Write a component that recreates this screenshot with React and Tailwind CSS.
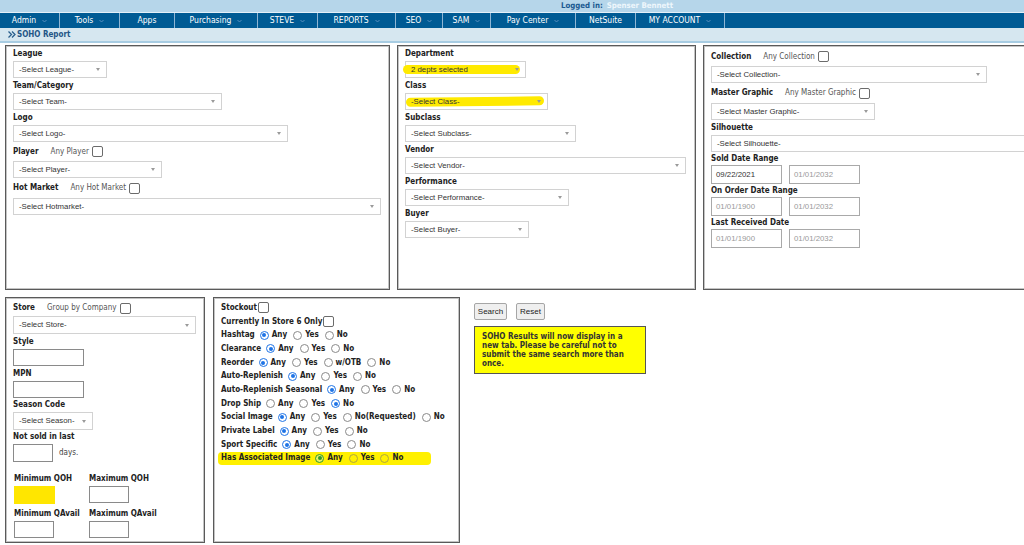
import React from 'react';

const cond = "font-['DejaVu_Sans_Condensed','DejaVu_Sans',sans-serif]";
const arial = "font-['Liberation_Sans',Arial,sans-serif]";

const navItems = [
    { label: 'Admin', w: 'w-[60px]', caret: true },
    { label: 'Tools', w: 'w-[60px]', caret: true },
    { label: 'Apps', w: 'w-[55px]', caret: false },
    { label: 'Purchasing', w: 'w-[83px]', caret: true },
    { label: 'STEVE', w: 'w-[60px]', caret: true },
    { label: 'REPORTS', w: 'w-[78px]', caret: true },
    { label: 'SEO', w: 'w-[47px]', caret: true },
    { label: 'SAM', w: 'w-[48px]', caret: true },
    { label: 'Pay Center', w: 'w-[85px]', caret: true },
    { label: 'NetSuite', w: 'w-[60px]', caret: false },
    { label: 'MY ACCOUNT', w: 'w-[89px]', caret: true },
];

const radioRows = [
    ['Hashtag', ['Any', 'Yes', 'No'], 0],
    ['Clearance', ['Any', 'Yes', 'No'], 0],
    ['Reorder', ['Any', 'Yes', 'w/OTB', 'No'], 0],
    ['Auto-Replenish', ['Any', 'Yes', 'No'], 0],
    ['Auto-Replenish Seasonal', ['Any', 'Yes', 'No'], 0],
    ['Drop Ship', ['Any', 'Yes', 'No'], 2],
    ['Social Image', ['Any', 'Yes', 'No(Requested)', 'No'], 0],
    ['Private Label', ['Any', 'Yes', 'No'], 0],
    ['Sport Specific', ['Any', 'Yes', 'No'], 0],
];

const Caret = () => (
    <svg width="5" height="4" viewBox="0 0 5 4" className="ml-[6px]">
        <path d="M0.5 1 L2.5 3 L4.5 1" fill="none" stroke="#5d93c2" strokeWidth="0.9" />
    </svg>
);

const Checkbox = () => (
    <span className="inline-block w-[11px] h-[11px] rounded-[2px] border border-[#6b6b6b] bg-white" />
);

const Select = ({ w, h = 'h-[17px]', text, hl }) => (
    <div className={`relative flex items-center border border-[#d2d2d2] bg-white ${w} ${h}`}>
        {hl}
        <span className={`relative pl-[5px] text-[7.8px] text-[#333] ${arial}`}>{text}</span>
        <span className="relative ml-auto mr-[6px] w-0 h-0 border-x-[2.5px] border-x-transparent border-t-[3px] border-t-[#9a9a9a]" />
    </div>
);

const Label = ({ h = 'h-[15px]', children, any }) => (
    <div className={`flex items-center ${h}`}>
        <span className={`font-bold text-[8px] text-[#222] ${cond}`}>{children}</span>
        {any && (
            <>
                <span className={`ml-[12px] mr-[3px] text-[8px] text-[#555] ${cond}`}>{any}</span>
                <Checkbox />
            </>
        )}
    </div>
);

const DateInput = ({ value, dark }) => (
    <div className={`flex items-center w-[71px] h-[19px] border border-[#a9a9a9] bg-white pl-[4px] text-[7.8px] ${arial} ${dark ? 'text-[#333]' : 'text-[#9a9a9a]'}`}>
        {value}
    </div>
);

const TextBox = ({ w, h = 'h-[17px]', hl }) => (
    <div className={`border ${hl ? 'border-[#ffe600] bg-[#ffe600]' : 'border-[#8a8a8a] bg-white'} ${w} ${h}`} />
);

const Radio = ({ on, hl }) => {
    if (on) {
        const c = hl ? 'border-[#2f9a2a]' : 'border-[#1f74e6]';
        const d = hl ? 'bg-[#2f9a2a]' : 'bg-[#1f74e6]';
        return (
            <span className={`flex items-center justify-center w-[9px] h-[9px] rounded-full border-[1.5px] ${c} ${hl ? 'bg-[#e6f06a]' : 'bg-white'}`}>
                <span className={`w-[4px] h-[4px] rounded-full ${d}`} />
            </span>
        );
    }
    return <span className={`w-[9px] h-[9px] rounded-full border ${hl ? 'border-[#b0a640]' : 'border-[#8a8a8a] bg-white'}`} />;
};

const RadioRow = ({ label, opts, sel, hl }) => (
    <div className={`flex items-center h-[13.7px] gap-[4px] font-bold text-[8px] text-[#222] ${cond}`}>
        <span className="mr-[1px]">{label}</span>
        {opts.map((o, i) => (
            <span key={i} className="flex items-center gap-[3px] mr-[2px]">
                <Radio on={i === sel} hl={hl} />
                <span>{o}</span>
            </span>
        ))}
    </div>
);

const Panel = ({ className, children }) => (
    <div className={`shrink-0 border border-[#5a5a5a] shadow-[inset_0_0_0_1px_#c4c4c4] bg-white ${className}`}>
        {children}
    </div>
);

export default function App() {
    return (
        <div className="w-[1024px] h-[545px] overflow-hidden bg-white">
            {/* header */}
            <div className={`h-[12px] bg-[#b6d6ea] flex items-center pl-[561px] text-[7.8px] font-bold ${cond}`}>
                <span className="text-[#1b5a91]">Logged in:</span>
                <span className="ml-[4px] text-[#eef7fc]">Spenser Bennett</span>
            </div>
            <div className="h-[16px] bg-[#005b94] border-t border-t-[#e4f0f8] flex">
                {navItems.map((n) => (
                    <div
                        key={n.label}
                        className={`${n.w} h-full flex items-center justify-center border-r border-r-[#8fb6d4] text-white text-[8.5px] ${cond}`}
                    >
                        <span>{n.label}</span>
                        {n.caret && <Caret />}
                    </div>
                ))}
            </div>
            <div className="h-[15px] bg-[#d6e7f0] border-b-2 border-b-[#a7cce2] flex items-center pl-[8px]">
                <svg width="8" height="7" viewBox="0 0 8 7" className="mr-[1px]">
                    <path d="M0.5 0.5 L3.5 3.5 L0.5 6.5 M4 0.5 L7 3.5 L4 6.5" fill="none" stroke="#2a5f8c" strokeWidth="1.3" />
                </svg>
                <span className={`font-bold text-[8px] text-[#1f5686] ${cond}`}>SOHO Report</span>
            </div>

            {/* top row */}
            <div className="flex gap-[7px] mt-[2px] pl-[5px]">
                <Panel className="w-[385px] h-[245px] pl-[7px]">
                    <Label>League</Label>
                    <Select w="w-[94px]" text="-Select League-" />
                    <Label>Team/Category</Label>
                    <Select w="w-[209px]" text="-Select Team-" />
                    <Label>Logo</Label>
                    <Select w="w-[275px]" text="-Select Logo-" />
                    <Label h="h-[19px]" any="Any Player">Player</Label>
                    <Select w="w-[149px]" text="-Select Player-" />
                    <Label h="h-[20px]" any="Any Hot Market">Hot Market</Label>
                    <Select w="w-[368px]" text="-Select Hotmarket-" />
                </Panel>

                <Panel className="w-[299px] h-[245px] pl-[7px]">
                    <Label>Department</Label>
                    <Select
                        w="w-[121px]"
                        text="2 depts selected"
                        hl={<span className="absolute left-[-3px] right-[5px] top-[3px] bottom-[3px] rounded-full bg-[#ffea00]" />}
                    />
                    <Label>Class</Label>
                    <Select
                        w="w-[143px]"
                        text="-Select Class-"
                        hl={<span className="absolute left-0 right-[3px] top-[3px] bottom-[3px] rounded-full bg-[#ffea00] -rotate-[0.6deg]" />}
                    />
                    <Label>Subclass</Label>
                    <Select w="w-[171px]" text="-Select Subclass-" />
                    <Label>Vendor</Label>
                    <Select w="w-[281px]" text="-Select Vendor-" />
                    <Label>Performance</Label>
                    <Select w="w-[164px]" text="-Select Performance-" />
                    <Label>Buyer</Label>
                    <Select w="w-[124px]" text="-Select Buyer-" />
                </Panel>

                <Panel className="w-[345px] h-[245px] pl-[7px] pt-[1px]">
                    <Label h="h-[19px]" any="Any Collection">Collection</Label>
                    <Select w="w-[276px]" text="-Select Collection-" />
                    <Label h="h-[20px]" any="Any Master Graphic">Master Graphic</Label>
                    <Select w="w-[164px]" text="-Select Master Graphic-" />
                    <Label>Silhouette</Label>
                    <Select w="w-[345px]" text="-Select Silhouette-" />
                    <Label h="h-[13px]">Sold Date Range</Label>
                    <div className="flex gap-[7px]">
                        <DateInput value="09/22/2021" dark />
                        <DateInput value="01/01/2032" />
                    </div>
                    <Label h="h-[13px]">On Order Date Range</Label>
                    <div className="flex gap-[7px]">
                        <DateInput value="01/01/1900" />
                        <DateInput value="01/01/2032" />
                    </div>
                    <Label h="h-[13px]">Last Received Date</Label>
                    <div className="flex gap-[7px]">
                        <DateInput value="01/01/1900" />
                        <DateInput value="01/01/2032" />
                    </div>
                </Panel>
            </div>

            {/* bottom row */}
            <div className="flex mt-[7px] pl-[5px]">
                <Panel className="w-[200px] h-[246px] pl-[7px] pt-[2px]">
                    <Label h="h-[16px]" any="Group by Company">Store</Label>
                    <Select w="w-[183px]" h="h-[18px]" text="-Select Store-" />
                    <Label>Style</Label>
                    <TextBox w="w-[71px]" />
                    <Label>MPN</Label>
                    <TextBox w="w-[71px]" />
                    <Label h="h-[14px]">Season Code</Label>
                    <Select w="w-[80px]" h="h-[18px]" text="-Select Season-" />
                    <Label h="h-[14px]">Not sold in last</Label>
                    <div className="flex items-center">
                        <TextBox w="w-[40px]" h="h-[18px]" />
                        <span className={`ml-[6px] text-[8px] text-[#444] ${cond}`}>days.</span>
                    </div>
                    <div className="grid grid-cols-[75px_75px] mt-[10px] pl-[1px]">
                        <Label h="h-[14px]">Minimum QOH</Label>
                        <Label h="h-[14px]">Maximum QOH</Label>
                        <TextBox w="w-[41px]" h="h-[18px]" hl />
                        <TextBox w="w-[40px]" />
                        <div className="mt-[3px]"><Label h="h-[14px]">Minimum QAvail</Label></div>
                        <div className="mt-[3px]"><Label h="h-[14px]">Maximum QAvail</Label></div>
                        <TextBox w="w-[40px]" />
                        <TextBox w="w-[40px]" />
                    </div>
                </Panel>

                <Panel className="ml-[8px] w-[247px] h-[246px] pl-[7px] pt-[3px]">
                    <div className={`flex items-center h-[13.7px] font-bold text-[8px] text-[#222] ${cond}`}>
                        <span className="mr-[1px]">Stockout</span>
                        <Checkbox />
                    </div>
                    <div className={`flex items-center h-[13.7px] font-bold text-[8px] text-[#222] ${cond}`}>
                        <span className="mr-[1px]">Currently In Store 6 Only</span>
                        <Checkbox />
                    </div>
                    {radioRows.map(([l, o, s]) => (
                        <RadioRow key={l} label={l} opts={o} sel={s} />
                    ))}
                    <div className="relative w-[213px] -ml-[3px] pl-[3px] rounded-[4px] bg-[#fff000]">
                        <RadioRow label="Has Associated Image" opts={['Any', 'Yes', 'No']} sel={0} hl />
                    </div>
                </Panel>

                <div className="ml-[14px] pt-[6px]">
                    <div className="flex gap-[9px]">
                        <button className={`w-[33px] h-[17px] bg-[#efefef] border border-[#a6a6a6] rounded-[2px] text-[8px] text-[#222] ${arial}`}>Search</button>
                        <button className={`w-[29px] h-[17px] bg-[#efefef] border border-[#a6a6a6] rounded-[2px] text-[8px] text-[#222] ${arial}`}>Reset</button>
                    </div>
                    <div className={`mt-[6px] w-[172px] h-[48px] bg-[#ffff00] border border-[#555] pl-[7px] pr-[16px] pt-[5px] font-bold text-[8px] leading-[9px] text-[#333] ${cond}`}>
                        SOHO Results will now display in a new tab. Please be careful not to submit the same search more than once.
                    </div>
                </div>
            </div>
        </div>
    );
}
